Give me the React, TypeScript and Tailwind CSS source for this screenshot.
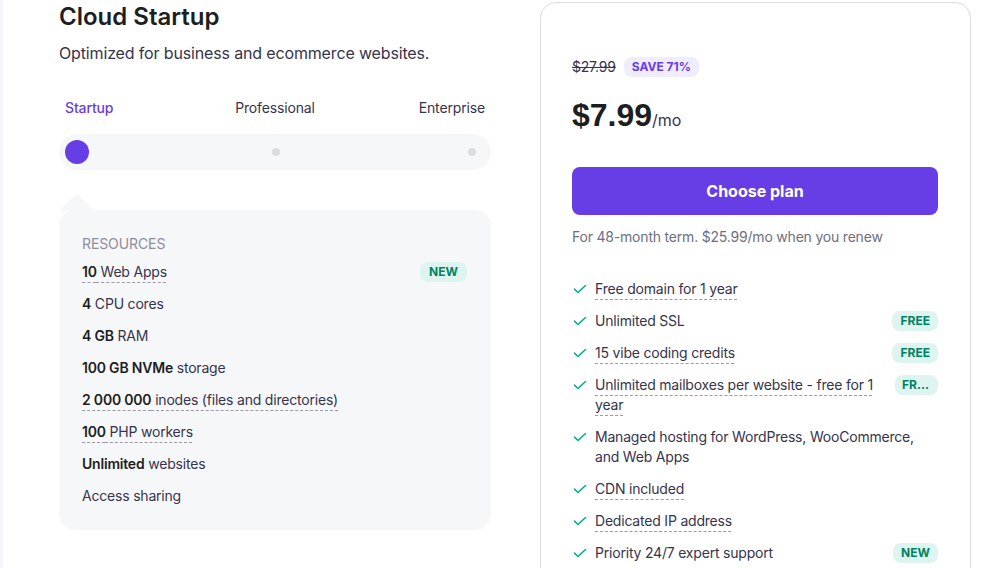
import React from "react";

const Check = () => (
  <svg width="16" height="20" viewBox="0 0 16 20" className="shrink-0">
    <path d="M2.5 10.2 L6 13.5 L13.5 6.5" fill="none" stroke="#00b090" strokeWidth="1.6" strokeLinecap="round" strokeLinejoin="round" />
  </svg>
);

const Badge = ({ children, className = "" }: { children: React.ReactNode; className?: string }) => (
  <span className={"shrink-0 h-5 rounded-lg bg-[#def4f0] text-[#008361] text-[12px] leading-5 font-bold tracking-normal " + className}>
    {children}
  </span>
);

const dash = "underline decoration-dashed decoration-[#9a9aab] decoration-1 underline-offset-[5px]";

export default function App() {
  const resources: { b?: string; t: string; u?: boolean; badge?: string }[] = [
    { b: "10", t: " Web Apps", u: true, badge: "NEW" },
    { b: "4", t: " CPU cores" },
    { b: "4 GB", t: " RAM" },
    { b: "100 GB NVMe", t: " storage" },
    { b: "2 000 000", t: " inodes (files and directories)", u: true },
    { b: "100", t: " PHP workers", u: true },
    { b: "Unlimited", t: " websites" },
    { t: "Access sharing" },
  ];

  const features: { t: string; u?: boolean; badge?: string; trunc?: boolean }[] = [
    { t: "Free domain for 1 year", u: true },
    { t: "Unlimited SSL", badge: "FREE" },
    { t: "15 vibe coding credits", u: true, badge: "FREE" },
    { t: "Unlimited mailboxes per website - free for 1 year", u: true, badge: "FR...", trunc: true },
    { t: "Managed hosting for WordPress, WooCommerce, and Web Apps" },
    { t: "CDN included", u: true },
    { t: "Dedicated IP address", u: true },
    { t: "Priority 24/7 expert support", badge: "NEW" },
  ];

  return (
    <div
      className="flex h-[568px] w-[981px] overflow-hidden bg-white text-[#36344d]"
      style={{ fontFamily: "Inter, 'Noto Sans', sans-serif" }}
    >
      <div className="w-[3px] shrink-0 bg-[#f4f5fb]" />
      <div className="flex pl-[56px] gap-[49px] items-start">
        {/* Left column */}
        <div className="w-[432px] shrink-0 pt-[1px]">
          <h1 className="text-[24px] leading-8 font-semibold text-[#1d1e20]">Cloud Startup</h1>
          <p className="mt-2 text-[16px] leading-6 text-[#36344d] tracking-[-0.15px]">
            Optimized for business and ecommerce websites.
          </p>

          <div className="mt-[33px] grid grid-cols-3 px-[6px] text-[14px] leading-5 tracking-[-0.15px]">
            <span className="text-left font-medium text-[#673de6]">Startup</span>
            <span className="text-center text-[#36344d]">Professional</span>
            <span className="text-right text-[#36344d]">Enterprise</span>
          </div>

          <div className="mt-4 h-9 rounded-full bg-[#f6f7f9] flex items-center justify-between pl-[6px] pr-[15px]">
            <span className="w-6 h-6 rounded-full bg-[#673de6]" />
            <span className="w-2 h-2 rounded-full bg-[#dadce0] -translate-x-[3px]" />
            <span className="w-2 h-2 rounded-full bg-[#dadce0]" />
          </div>

          <div className="relative mt-10 rounded-2xl bg-[#f6f7f9] pl-[23px] pr-6 pt-6 pb-6">
            <svg width="36" height="17" viewBox="0 0 36 17" className="absolute left-0 -top-4">
              <path d="M0 17 L15.5 1.6 Q18 -0.6 20.5 1.6 L35 17 Z" fill="#f6f7f9" />
            </svg>
            <div className="text-[14px] leading-5 uppercase text-[#8e8e9c] tracking-[-0.1px]">Resources</div>
            <ul className="mt-2 flex flex-col gap-3 text-[14px] leading-5 tracking-[-0.2px]">
              {resources.map((r, i) => (
                <li key={i} className="flex items-center justify-between">
                  <span className={r.u ? dash : ""}>
                    {r.b && <b className="font-semibold text-[#1d1e20]">{r.b}</b>}
                    {r.t}
                  </span>
                  {r.badge && <Badge className="px-[9px]">{r.badge}</Badge>}
                </li>
              ))}
            </ul>
          </div>
        </div>

        {/* Right card */}
        <div className="w-[431px] shrink-0 mt-[2px] rounded-2xl border border-[#dadce0] pl-[31px] pr-8 pt-[54px] pb-8">
          <div className="flex items-center gap-2">
            <span className="text-[14px] leading-5 line-through text-[#36344d] tracking-[-0.2px]">$27.99</span>
            <span className="h-5 px-2 rounded-lg bg-[#efecfc] text-[#673de6] text-[12px] leading-5 font-bold">SAVE 71%</span>
          </div>
          <div className="mt-[18px] flex items-baseline h-10">
            <span
              className="text-[32px] leading-10 font-bold text-[#1d1e20]"
              style={{ fontFamily: "'Liberation Sans', Arial, sans-serif" }}
            >
              $7.99
            </span>
            <span className="text-[16px] text-[#36344d]">/mo</span>
          </div>
          <button className="mt-8 w-full h-12 rounded-lg bg-[#673de6] text-white text-[16px] font-bold">
            Choose plan
          </button>
          <p className="mt-3 text-[14px] leading-5 text-[#6d7081] tracking-[-0.2px]">
            For 48-month term. $25.99/mo when you renew
          </p>

          <ul className="mt-8 flex flex-col gap-3 text-[14px] leading-5 tracking-[-0.2px]">
            {features.map((f, i) => (
              <li key={i} className="flex items-start gap-[7px]">
                <Check />
                <div className="flex-1 flex items-start justify-between gap-4">
                  <span className={(f.u ? dash : "") + (f.trunc ? " max-w-[288px]" : "")}>{f.t}</span>
                  {f.badge && (
                    <Badge className={f.trunc ? "w-[43px] px-[7px] overflow-hidden whitespace-nowrap" : "px-2"}>
                      {f.badge}
                    </Badge>
                  )}
                </div>
              </li>
            ))}
          </ul>
        </div>
      </div>
    </div>
  );
}
